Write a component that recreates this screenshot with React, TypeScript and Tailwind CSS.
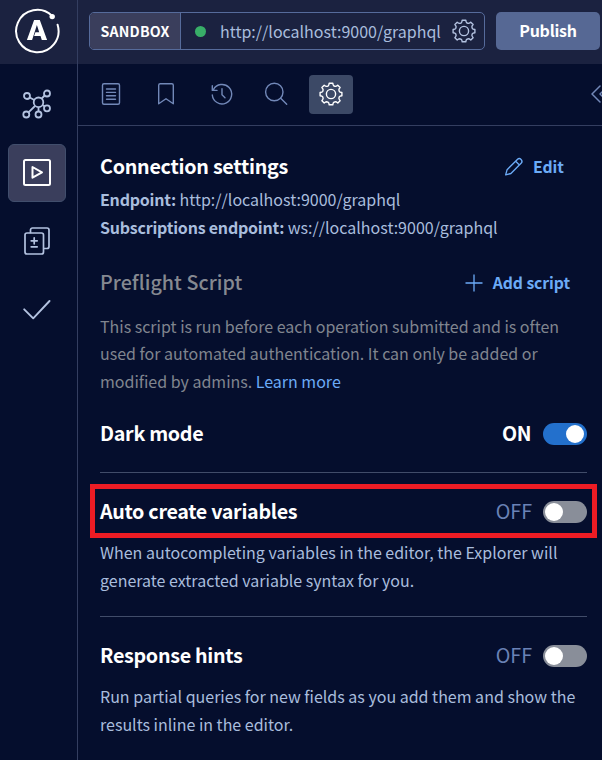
import type { ReactNode } from "react";

const GEAR =
  "M10.2 1.200h3.600c.2 1.600.3 2.400.9 2.700.6.200 1.300.500 1.900.5.600-.1 1.300-.6 2.200-1.200l2.300 2.300c-.7.900-1.200 1.600-1.200 2.200 0 .6.300 1.300.500 1.900.4.600 1.200.7 2.500.9v3.200c-1.300.2-2.100.4-2.500.9-.3.600-.5 1.200-.5 1.900.1.600.5 1.200 1.200 2.200l-2.300 2.300c-.9-.7-1.600-1.200-2.200-1.200-.7 0-1.300.2-1.900.5-.6.400-.7 1.200-.9 2.500h-3.600c-.2-1.300-.4-2.100-.9-2.500-.6-.3-1.200-.5-1.900-.5-.6.1-1.300.5-2.200 1.200L2.900 18.700c.7-.9 1.200-1.600 1.200-2.200 0-.7-.2-1.300-.5-1.900-.4-.5-1.200-.7-2.500-.9v-3.200c1.300-.2 2.100-.4 2.500-.9.3-.6.5-1.200.5-1.900-.1-.6-.5-1.300-1.200-2.200l2.300-2.300c.9.700 1.600 1.200 2.200 1.200.7 0 1.300-.2 1.900-.5.600-.4.700-1.100.9-2.700z";

function Icon({ children, className, width = 1.4 }: { children: ReactNode; className: string; width?: number }) {
  return (
    <svg viewBox="0 0 24 24" fill="none" stroke="currentColor" strokeWidth={width} strokeLinecap="round" strokeLinejoin="round" className={"shrink-0 " + className}>
      {children}
    </svg>
  );
}

function Gear({ className }: { className: string }) {
  return (
    <Icon className={className}>
      <path d={GEAR} />
      <circle cx="12" cy="12" r="4.6" />
    </Icon>
  );
}

function Logo() {
  return (
    <svg viewBox="0 0 46 46" className="h-[46px] w-[46px] shrink-0" fill="none">
      <path d="M43.6 16.800A21.2 21.2 0 1 1 38 7.7" stroke="#fff" strokeWidth="2" strokeLinecap="round" />
      <circle cx="38.2" cy="8.6" r="2.7" fill="#fff" />
      <path d="M20.1 12h5.7l7.3 20h-5.3l-1.3-4h-6.4l1.3-3.7h3.8L22.9 17l-4.8 15h-5.2z" fill="#fff" />
    </svg>
  );
}

function Sidebar() {
  return (
    <aside className="flex w-[78px] shrink-0 flex-col items-center border-r border-[#343e60] text-[#b3c2e0]">
      <div className="flex h-16 w-full items-center justify-center bg-[#1b2240] pr-[3px] pb-[2px]">
        <Logo />
      </div>
      <div className="flex h-20 items-center pr-[3px]">
        <svg viewBox="0 0 30 30" fill="none" stroke="currentColor" strokeWidth="1.8" className="h-[30px] w-[30px]">
          <circle cx="16.5" cy="13.3" r="4.8" />
          <circle cx="5" cy="7" r="3" />
          <circle cx="25" cy="4.5" r="3" />
          <circle cx="4.300" cy="25.5" r="3" />
          <circle cx="16.5" cy="25.5" r="3" />
          <circle cx="25" cy="19.3" r="3" />
          <path d="M7.7 8.5l4.6 2.5M22.7 6.5l-3 3M13 17l-6.500 6.3M16.5 18.1v4.4M20.6 16l2.2 1.6" />
        </svg>
      </div>
      <div className="mr-[3px] flex h-[58px] w-[58px] items-center justify-center rounded-md border border-[#414e6c] bg-[#3a3e5c] pb-px text-white">
        <svg viewBox="0 0 28 27" fill="none" stroke="currentColor" strokeWidth="2" strokeLinejoin="round" className="h-[27px] w-7">
          <rect x="1" y="1" width="26" height="25" rx="1.5" />
          <path d="M9.5 8v10.700l9.5-5.400z" />
        </svg>
      </div>
      <svg viewBox="0 0 26 28" fill="none" stroke="currentColor" strokeWidth="1.7" strokeLinecap="round" strokeLinejoin="round" className="mt-[25px] mr-[3px] h-7 w-[26px]">
        <rect x="1" y="6" width="18.5" height="21" rx="2" />
        <path d="M6.5 5.5V3a2 2 0 0 1 2-2H23a2 2 0 0 1 2 2v16.500a2 2 0 0 1-2 2h-3" />
        <path d="M10.200 10.800v6M7.200 13.800h6M7.200 19.800h6" />
      </svg>
      <svg viewBox="0 0 28 20" fill="none" stroke="currentColor" strokeWidth="1.900" strokeLinecap="round" strokeLinejoin="round" className="mt-[45px] mr-[3px] h-5 w-7">
        <path d="M1.200 9.300l9 9L26.500 1" />
      </svg>
    </aside>
  );
}

function Header() {
  return (
    <header className="flex h-16 shrink-0 items-start bg-[#1b2240] pt-3 pl-[11px]">
      <div className="flex h-[38px] w-[396px] shrink-0 items-center overflow-hidden rounded-[5px] border border-[#566b9b]">
        <div className="flex h-full w-[91px] shrink-0 items-center justify-center border-r border-[#566b9b] bg-[#3a3e5c] pt-px text-[14.200px] font-bold tracking-[0.2px] text-white">
          SANDBOX
        </div>
        <span className="ml-[14px] h-[11px] w-[11px] shrink-0 rounded-full bg-[#38ae68]" />
        <span className="ml-[14px] w-[221px] text-[16px] whitespace-nowrap text-[#a9bddd]">http://localhost:9000/graphql</span>
        <Gear className="ml-[11px] h-6 w-6 text-[#b3c2e0]" />
      </div>
      <button className="ml-[11px] h-[38px] w-[104px] shrink-0 rounded-[5px] bg-[#566894] pb-[2px] text-[16px] font-bold tracking-[-0.250px] text-white">Publish</button>
    </header>
  );
}

function Toolbar() {
  return (
    <nav className="flex h-[62px] shrink-0 items-center overflow-hidden border-b border-[#343e60] text-[#7288b8]">
      <Icon className="mb-px ml-[21px] h-6 w-6">
        <rect x="3.500" y="1.700" width="17" height="20.600" rx="1.500" />
        <path d="M7.500 7h9M7.500 10.400h9M7.500 13.800h9M7.500 17.200h9" />
      </Icon>
      <Icon className="mb-px ml-[31px] h-6 w-6">
        <path d="M4.700 3.200a1.500 1.500 0 0 1 1.500-1.500h11.600a1.500 1.500 0 0 1 1.500 1.500v18.600L12 16.700l-7.300 5.100z" />
      </Icon>
      <Icon className="mb-px ml-[32px] h-6 w-6">
        <path d="M3.400 7.600A9.700 9.700 0 1 1 2.300 13M2.300 3.700v4.700H7M12 6.700v6l3 3" />
      </Icon>
      <Icon className="mb-px ml-[30px] h-6 w-6">
        <circle cx="10.300" cy="10" r="8.700" />
        <path d="M16.700 16.300l6 6" />
      </Icon>
      <div className="ml-[21px] flex h-[39px] w-11 shrink-0 items-center justify-center rounded bg-[#3c4966] pb-px text-white">
        <Gear className="h-6 w-6" />
      </div>
      <svg viewBox="0 0 20 18" fill="none" stroke="currentColor" strokeWidth="1.500" strokeLinecap="round" strokeLinejoin="round" className="mb-px ml-[238px] h-[18px] w-5 shrink-0">
        <path d="M9 1L1 9l8 8M17 1L9 9l8 8" />
      </svg>
    </nav>
  );
}

function Toggle({ on }: { on?: boolean }) {
  return on ? (
    <span className="flex h-[22px] w-11 items-center justify-end rounded-full bg-[#2370cc] pr-[3px] pb-px">
      <span className="h-[18px] w-[18px] rounded-full bg-white" />
    </span>
  ) : (
    <span className="flex h-[22px] w-11 items-center rounded-full bg-[#898e99] pb-px pl-[1.500px]">
      <span className="h-[18px] w-[18px] rounded-full bg-white" />
    </span>
  );
}

function Setting({ title, on }: { title: string; on?: boolean }) {
  return (
    <div className="flex h-8 w-[487px] items-center">
      <h2 className="flex-1 pb-[2px] text-[19.700px] leading-[30px] font-bold tracking-[-0.300px] text-white">{title}</h2>
      {on ? (
        <span className="mr-3 pb-[2px] text-[19.700px] leading-[30px] font-bold tracking-[-0.500px] text-white">ON</span>
      ) : (
        <span className="mr-[11px] pb-[2px] text-[19.700px] leading-[30px] text-[#6a82b6]">OFF</span>
      )}
      <Toggle on={on} />
    </div>
  );
}

export default function App() {
  return (
    <div className="flex h-[760px] w-[602px] overflow-hidden bg-[#050e2d] font-['Noto_Sans_CJK_SC','Noto_Sans',sans-serif]">
      <Sidebar />
      <div className="flex w-[524px] flex-col overflow-hidden">
        <Header />
        <Toolbar />
        <main className="pt-[27px] pl-[22px] text-[16px] leading-[27.500px] whitespace-nowrap text-[#a9bddd]">
          <div className="flex h-7 w-[487px] items-center">
            <h2 className="flex-1 pb-[2px] text-[19.700px] leading-[26px] font-bold tracking-[-0.260px] text-white">Connection settings</h2>
            <button className="mr-[23px] flex items-center gap-[9px] text-[15.750px] font-bold text-[#6cabf7]">
              <Icon className="h-5 w-5" width={1.600}>
                <path d="M2 21.500l1.700-6.300L16 3a2.800 2.800 0 0 1 4.500 4.500L8.300 19.800zM14 5l4.500 4.500" />
              </Icon>
              Edit
            </button>
          </div>
          <div className="mt-[4px] leading-7">
            <p><b className="tracking-[-0.220px]">Endpoint:</b> http://localhost:9000/graphql</p>
            <p><b className="tracking-[-0.220px]">Subscriptions endpoint:</b> ws://localhost:9000/graphql</p>
          </div>
          <div className="mt-[28px] flex h-7 w-[487px] items-center">
            <h2 className="flex-1 pb-[2px] text-[19.700px] leading-[26px] font-medium tracking-[0.060px] text-[#858991]">Preflight Script</h2>
            <button className="mr-[17px] flex items-center gap-[10px] text-[15.750px] font-bold tracking-[-0.080px] text-[#6cabf7]">
              <svg viewBox="0 0 18 18" stroke="currentColor" strokeWidth="1.300" className="h-[18px] w-[18px]">
                <path d="M9 .5v17M.5 9h17" />
              </svg>
              Add script
            </button>
          </div>
          <p className="mt-[15.500px] tracking-[-0.010px] text-[#80858f]">
            This script is run before each operation submitted and is often<br />
            used for automated authentication. It can only be added or<br />
            modified by admins. <a className="text-[#6cabf7]">Learn more</a>
          </p>
          <div className="mt-[23px]">
            <Setting title="Dark mode" on />
          </div>
          <hr className="mt-[22px] w-[487px] border-[#414c69]" />
          <div className="mt-[11px] ml-[-10px] flex h-[54px] w-[507px] items-center border-5 border-[#ed1c24] pt-[2px] pl-[5px]">
            <Setting title="Auto create variables" />
          </div>
          <p className="leading-7">
            When autocompleting variables in the editor, the Explorer will<br />
            generate extracted variable syntax for you.
          </p>
          <hr className="mt-[22px] w-[487px] border-[#414c69]" />
          <div className="mt-[23px]">
            <Setting title="Response hints" />
          </div>
          <p className="mt-[11px]">
            Run partial queries for new fields as you add them and show the<br />
            results inline in the editor.
          </p>
        </main>
      </div>
    </div>
  );
}
